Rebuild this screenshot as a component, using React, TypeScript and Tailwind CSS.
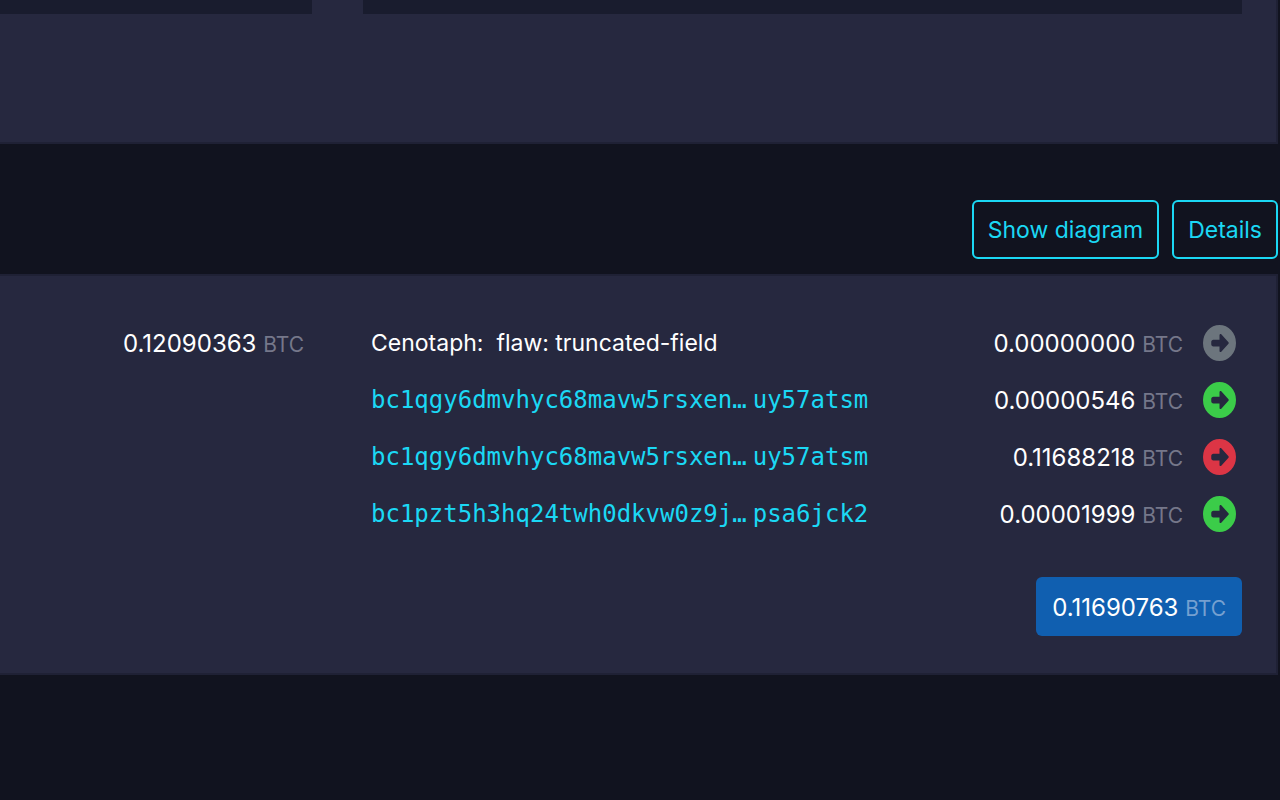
import { FaCircleRight } from "react-icons/fa6";

type Output = {
  label?: string;
  address?: [string, string];
  amount: string;
  status: "none" | "unspent" | "spent";
};

const outputs: Output[] = [
  { label: "Cenotaph:\u00a0 flaw: truncated-field", amount: "0.00000000", status: "none" },
  { address: ["bc1qgy6dmvhyc68mavw5rsxen…", "uy57atsm"], amount: "0.00000546", status: "unspent" },
  { address: ["bc1qgy6dmvhyc68mavw5rsxen…", "uy57atsm"], amount: "0.11688218", status: "spent" },
  { address: ["bc1pzt5h3hq24twh0dkvw0z9j…", "psa6jck2"], amount: "0.00001999", status: "unspent" },
];

const statusColor = {
  none: "text-[#6c757d]",
  unspent: "text-[#3bcc49]",
  spent: "text-[#dc3545]",
};

function Amount({ value, unitClass = "text-[#75778a]" }: { value: string; unitClass?: string }) {
  return (
    <span className="block pt-[2px] text-[24px] whitespace-nowrap">
      {value} <span className={`text-[21px] leading-none ${unitClass}`}>BTC</span>
    </span>
  );
}

export default function App() {
  return (
    <main className="min-h-screen overflow-hidden bg-[#11131f] pr-[2px] font-['Inter',sans-serif] text-[23px] leading-[36px] text-white">
      <section className="flex h-36 items-start gap-[51px] border-r-2 border-b-2 border-[#1f2135] bg-[#26283f] pr-[34px]">
        <div className="h-[14px] w-[312px] bg-[#191c2e]" />
        <div className="h-[14px] flex-1 bg-[#191c2e]" />
      </section>

      <div className="flex justify-end gap-[13px] pt-14 pb-[15px] text-[#1bd8f4]">
        <button type="button" className="h-[59px] rounded-md border-2 border-[#1bd8f4] px-[14px]">
          Show diagram
        </button>
        <button type="button" className="h-[59px] rounded-md border-2 border-[#1bd8f4] px-[14px]">
          Details
        </button>
      </div>

      <section className="flex border-y-2 border-r-2 border-[#1f2135] bg-[#26283f] pt-[38px] pr-[34px] pb-[37px]">
        <div className="flex h-[57px] w-[304px] items-center justify-end">
          <Amount value="0.12090363" />
        </div>
        <div className="flex-1 pl-[59px]">
          <table className="w-full">
            <tbody>
              {outputs.map((output, index) => (
                <tr key={index} className="h-[57px]">
                  <td className="pl-2 whitespace-nowrap">
                    {output.address ? (
                      <a
                        href="#address"
                        className="flex gap-[6px] font-['DejaVu_Sans_Mono',monospace] text-[24px] text-[#1bd8f4]"
                      >
                        <span>{output.address[0]}</span>
                        <span>{output.address[1]}</span>
                      </a>
                    ) : (
                      output.label
                    )}
                  </td>
                  <td className="text-right">
                    <Amount value={output.amount} />
                  </td>
                  <td className="w-[59px] pt-px pr-[6px]">
                    <FaCircleRight
                      preserveAspectRatio="none"
                      className={`ml-auto h-[36px] w-[33px] ${statusColor[output.status]}`}
                    />
                  </td>
                </tr>
              ))}
            </tbody>
          </table>
          <div className="mt-[35px] flex justify-end">
            <button type="button" className="h-[59px] rounded-md bg-[#105fb0] px-4">
              <Amount value="0.11690763" unitClass="text-[#75a0d0]" />
            </button>
          </div>
        </div>
      </section>
    </main>
  );
}
